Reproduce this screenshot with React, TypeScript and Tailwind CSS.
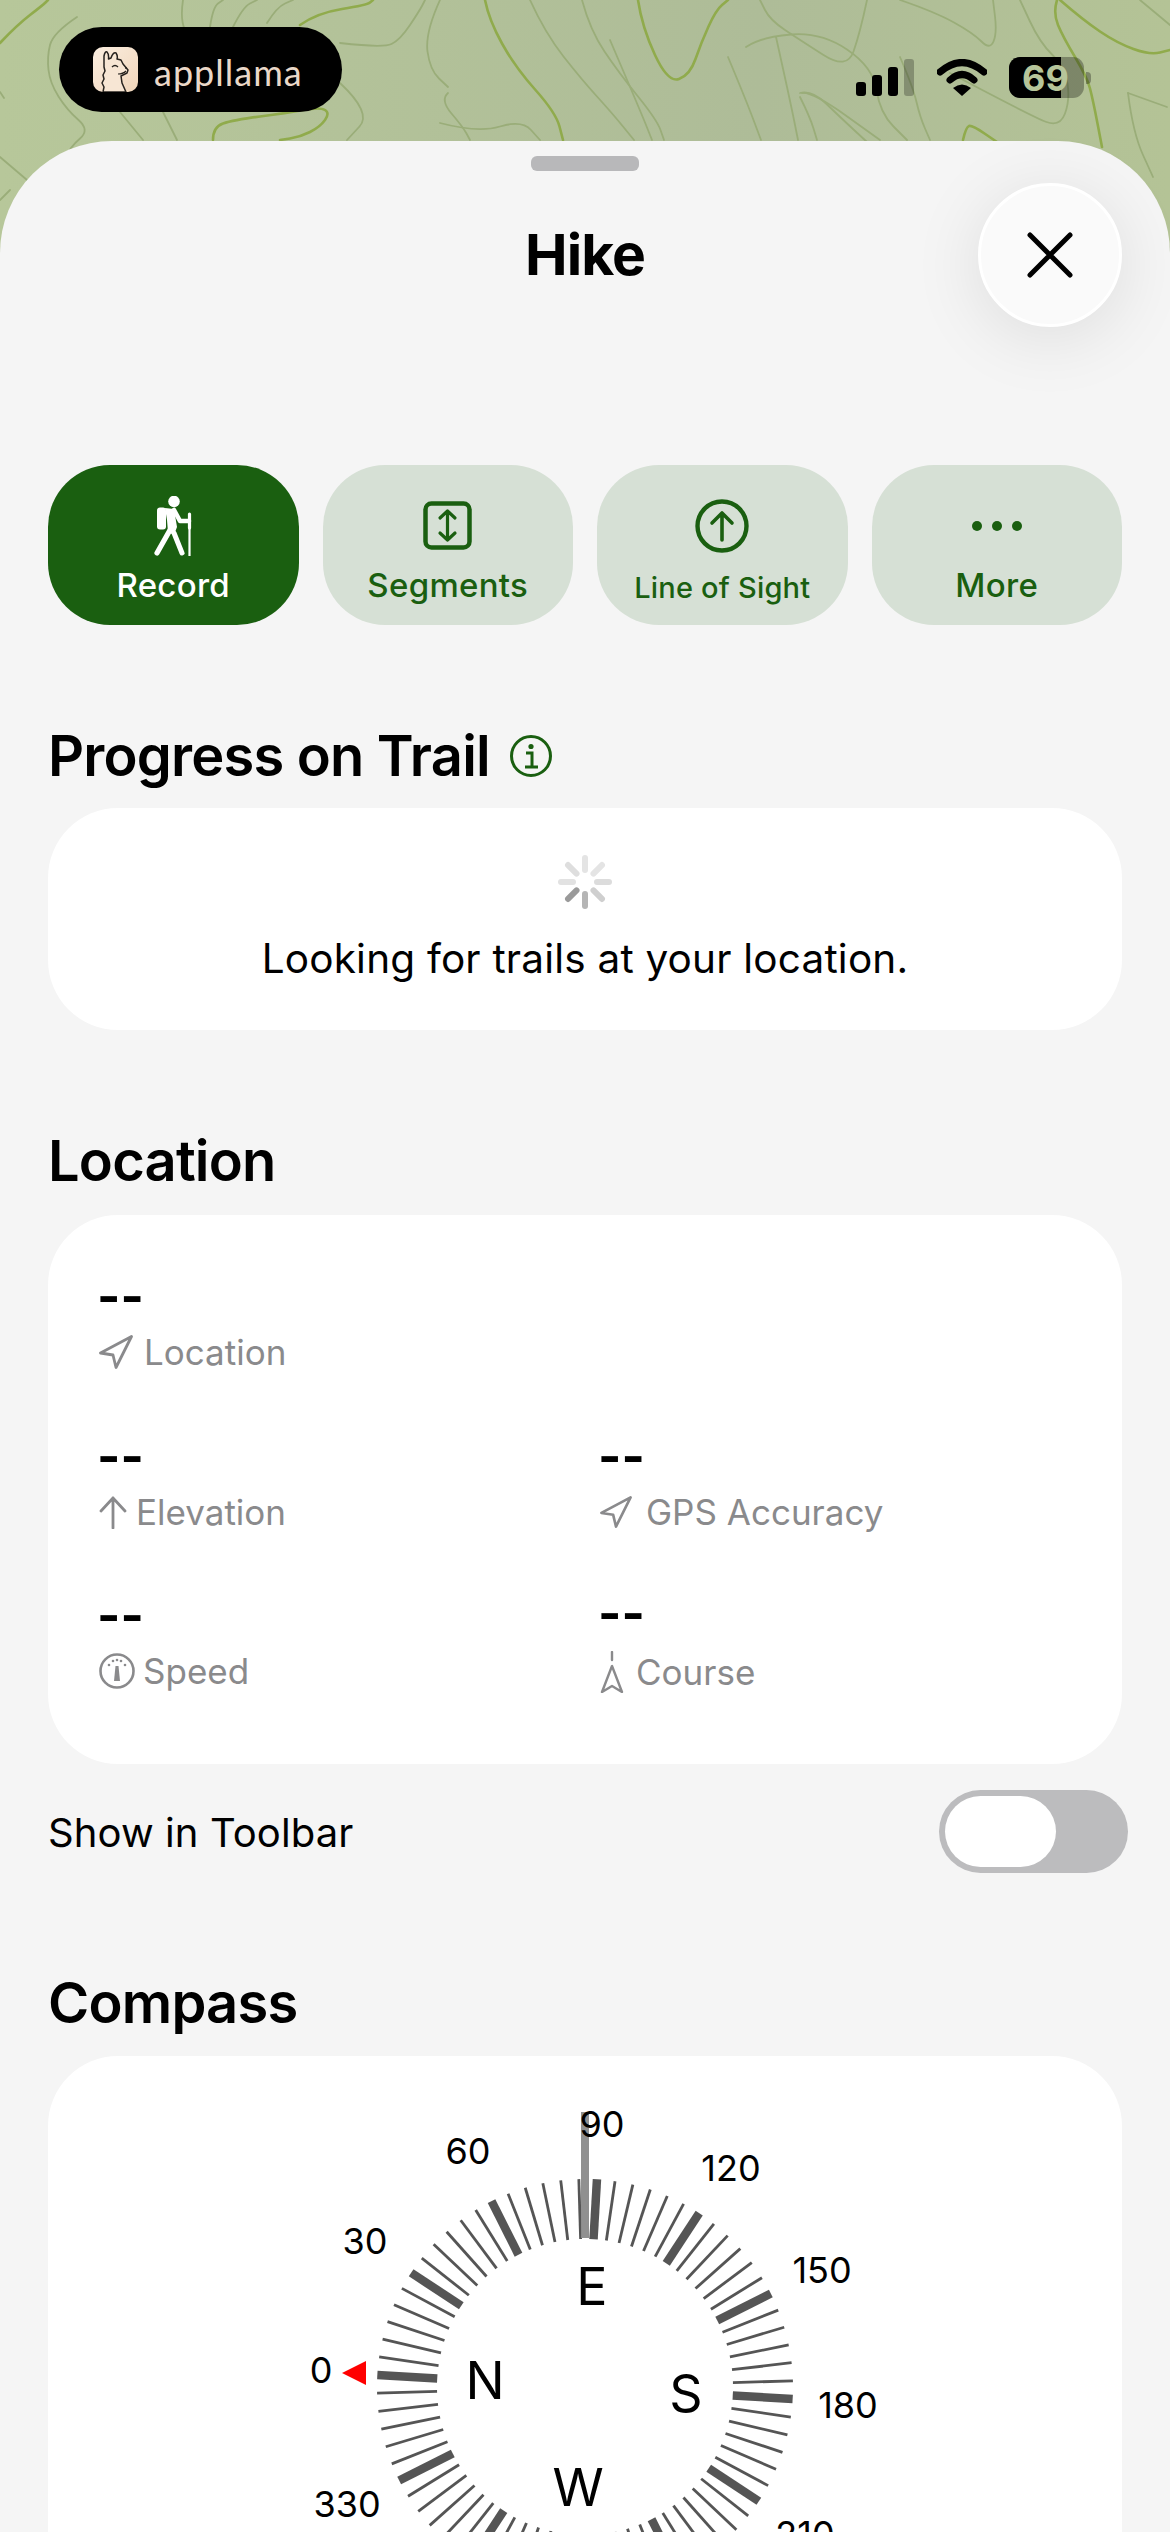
import React from "react";

const faint: string[] = [
  "M77 17L53 33L47 57L50 83L67 110L90 130L70 147L60 170",
  "M0 92L4 98",
  "M0 157L27 180",
  "M120 112L143 140",
  "M163 112L177 140",
  "M340 83L372 113L347 140",
  "M267 23L277 7L293 0",
  "M233 27L243 7L257 0",
  "M210 27L213 7L223 0",
  "M183 0L180 20L190 40",
  "M340 43L383 48L400 40L420 10L425 0",
  "M440 0L425 33L430 70L448 87",
  "M448 93L440 100L463 127L470 140",
  "M440 123L478 133L522 120L540 140",
  "M530 0L545 33L582 80L612 113L634 140",
  "M582 0L590 30L619 73L657 120L664 140",
  "M610 40L640 110L652 140",
  "M746 47L761 37L821 32L873 67L880 113L907 140",
  "M728 57L746 100L761 140",
  "M776 37L790 100L798 140",
  "M802 93L813 92L880 140",
  "M867 0L860 33L847 70L800 40L770 20L760 0",
  "M800 93L812 90L840 117L867 142",
  "M900 57L913 87L920 117L930 140",
  "M800 97L810 117L817 140",
  "M900 0L935 12L973 33L990 50L997 33L993 0",
  "M950 73L1033 117L1060 127L1070 100L1065 67L1040 43L1020 0",
  "M1128 93L1167 107",
  "M1128 93L1133 133L1153 177",
  "M1170 250L1150 200",
  "M1140 0L1170 25",
  "M0 200L10 190",
];

const strong: string[] = [
  "M0 43L17 25L43 5L48 0",
  "M300 25L317 13L367 5L373 0",
  "M213 140L213 127L233 120L287 113L320 107L330 113L320 127L300 137L280 140",
  "M485 0L489 20L515 67L556 113L563 140",
  "M638 0L642 27L668 83L690 75L701 43L716 10L728 0",
  "M1057 0L1053 13L1063 37L1087 77L1093 100L1102 147",
  "M1060 0L1083 20L1117 43L1150 55L1170 50",
  "M963 140L966 127L972 125L997 142",
];

function smooth(d: string): string {
  const pts = d
    .slice(1)
    .split("L")
    .map((p) => p.split(" ").map(Number));
  if (pts.length < 3) return d;
  let out = `M${pts[0][0]} ${pts[0][1]}`;
  for (let i = 1; i < pts.length - 1; i++) {
    const mx = (pts[i][0] + pts[i + 1][0]) / 2;
    const my = (pts[i][1] + pts[i + 1][1]) / 2;
    out += `Q${pts[i][0]} ${pts[i][1]} ${mx} ${my}`;
  }
  const last = pts[pts.length - 1];
  return `${out}L${last[0]} ${last[1]}`;
}

function MapBackground() {
  return (
    <svg className="absolute left-0 top-0 blur-[0.7px]" width="1170" height="340" viewBox="0 0 1170 340" fill="none">
      <defs>
        <linearGradient id="mapg" x1="0" y1="0" x2="1" y2="0">
          <stop offset="0" stopColor="#b7c79a" />
          <stop offset="0.65" stopColor="#aebc98" />
          <stop offset="1" stopColor="#b4c396" />
        </linearGradient>
      </defs>
      <rect width="1170" height="340" fill="url(#mapg)" />
      {faint.map((d) => (
        <path key={d} d={smooth(d)} stroke="#9aad79" strokeWidth="1.8" strokeLinejoin="round" strokeLinecap="round" />
      ))}
      {strong.map((d) => (
        <path key={d} d={smooth(d)} stroke="#90ab4c" strokeWidth="2.6" strokeLinejoin="round" strokeLinecap="round" />
      ))}
    </svg>
  );
}

function Llama() {
  return (
    <svg width="45" height="45" viewBox="0 0 45 45" fill="none" className="rounded-[10px]">
      <defs>
        <linearGradient id="llg" x1="0" y1="0" x2="1" y2="1">
          <stop offset="0" stopColor="#fbeee0" />
          <stop offset="1" stopColor="#f0d5ba" />
        </linearGradient>
      </defs>
      <rect width="45" height="45" fill="url(#llg)" />
      <path
        d="M10 45L11 40L9 36L11 32L10 28L12 24L11 20L11 9Q12 4 14 5Q16 7 15.5 12L18 11Q20 5 23 6Q25 9 24 12L28 13L30 17L35 23L34 26L28 29L29 36L33 45Z"
        fill="#f7e6d4"
        stroke="#26221e"
        strokeWidth="1.5"
        strokeLinejoin="round"
      />
      <path d="M19 20Q22 17 25 20" stroke="#26221e" strokeWidth="1.3" />
      <path d="M25 27Q30 27 33 24" stroke="#26221e" strokeWidth="1.2" />
      <circle cx="33" cy="21" r="0.9" fill="#26221e" />
    </svg>
  );
}

function Signal() {
  return (
    <div className="flex items-end gap-[6px] h-[37px]">
      <div className="w-[10px] h-[14px] rounded-[3px] bg-black" />
      <div className="w-[10px] h-[21px] rounded-[3px] bg-black" />
      <div className="w-[10px] h-[29px] rounded-[3px] bg-black" />
      <div className="w-[10px] h-[37px] rounded-[3px] bg-black/25" />
    </div>
  );
}

function Wifi() {
  return (
    <svg width="50" height="37" viewBox="0 0 50 37" fill="none">
      <path d="M3 13Q25 -6 47 13" stroke="#000" strokeWidth="7" strokeLinecap="round" />
      <path d="M13 21Q25 10 37 21" stroke="#000" strokeWidth="7" strokeLinecap="round" />
      <path d="M16 29Q25 22 34 29L25 37Z" fill="#000" />
    </svg>
  );
}

function Battery() {
  return (
    <div className="relative flex items-center">
      <div className="relative w-[75px] h-[41px] rounded-[11px] overflow-hidden bg-black/30">
        <div className="h-full w-[52px] bg-black" />
        <span className="absolute inset-0 flex items-center justify-center font-['Inter',sans-serif] font-bold text-[36px] leading-none text-[#b6c59a] pr-[2px]">69</span>
      </div>
      <div className="ml-[2px] w-[5px] h-[12px] rounded-r-[4px] bg-black/30" />
    </div>
  );
}

function Hiker({ color }: { color: string }) {
  return (
    <svg width="39" height="60" viewBox="0 0 39 60" fill="none">
      <circle cx="20" cy="5.5" r="5.8" fill={color} />
      <rect x="3" y="11.5" width="9" height="22" rx="3" fill={color} />
      <path d="M11 12L20 13L23 31L20 39L14 36L13 24Z" fill={color} />
      <path d="M20 14L26 25L35 25" stroke={color} strokeWidth="4.6" strokeLinejoin="round" strokeLinecap="round" />
      <path d="M16 34L3 57" stroke={color} strokeWidth="5.2" strokeLinecap="round" />
      <path d="M20 37L28 57" stroke={color} strokeWidth="5" strokeLinecap="round" />
      <path d="M35.5 18V32" stroke={color} strokeWidth="3.2" strokeLinecap="round" />
      <path d="M35.5 30V60" stroke={color} strokeWidth="2.2" />
    </svg>
  );
}

function SegmentsIcon() {
  return (
    <svg width="49" height="49" viewBox="0 0 49 49" fill="none" stroke="#1a5f10">
      <rect x="2.5" y="2.5" width="44" height="44" rx="6" strokeWidth="4.5" />
      <path d="M24.5 10V39M17 17L24.5 10L32 17M17 32L24.5 39L32 32" strokeWidth="3.2" strokeLinecap="round" strokeLinejoin="round" />
    </svg>
  );
}

function SightIcon() {
  return (
    <svg width="54" height="54" viewBox="0 0 54 54" fill="none" stroke="#1a5f10">
      <circle cx="27" cy="27" r="24.5" strokeWidth="4.4" />
      <path d="M27 41V14M17 24L27 14L37 24" strokeWidth="3.6" strokeLinecap="round" strokeLinejoin="round" />
    </svg>
  );
}

function MoreIcon() {
  return (
    <div className="flex gap-[10px]">
      <div className="w-[10px] h-[10px] rounded-full bg-[#1a5f10]" />
      <div className="w-[10px] h-[10px] rounded-full bg-[#1a5f10]" />
      <div className="w-[10px] h-[10px] rounded-full bg-[#1a5f10]" />
    </div>
  );
}

function ActionButton({
  active,
  label,
  icon,
  small,
}: {
  active?: boolean;
  label: string;
  icon: React.ReactNode;
  small?: boolean;
}) {
  return (
    <div
      className={`flex-1 h-[160px] rounded-[62px] flex flex-col items-center ${active ? "bg-[#1a5f10] text-white" : "bg-[#d6e0d5] text-[#1a5f10]"}`}
    >
      <div className="h-[100px] w-full flex items-center justify-center pt-[21px]">{icon}</div>
      <div className={`font-medium leading-none ${small ? "text-[29px] mt-[8px] tracking-[0.2px]" : "text-[33px] mt-[4px] tracking-[0.3px]"}`}>{label}</div>
    </div>
  );
}

function Heading({ children, top }: { children: React.ReactNode; top: string }) {
  return (
    <div className={`${top} h-[70px] px-[48px] flex items-center gap-[20px] text-[56px] font-semibold tracking-[-0.8px] text-black`}>
      {children}
    </div>
  );
}

function Spinner() {
  const shades = ["#e4e4e4", "#e4e4e4", "#dcdcdc", "#cfcfcf", "#b5b5b5", "#9a9a9a", "#e2e2e2", "#dedede"];
  return (
    <svg width="56" height="56" viewBox="-28 -28 56 56">
      {shades.map((c, i) => (
        <line key={i} x1="0" y1="-12" x2="0" y2="-24" stroke={c} strokeWidth="6" strokeLinecap="round" transform={`rotate(${i * 45})`} />
      ))}
    </svg>
  );
}

function NavIcon({ size }: { size: number }) {
  return (
    <svg width={size} height={size} viewBox="0 0 34 34" fill="none" stroke="#8a8a8c" strokeWidth="2.8" strokeLinejoin="round">
      <path d="M32.5 1.5L1.5 18L14 20L17 32.5Z" />
    </svg>
  );
}

function ArrowIcon() {
  return (
    <svg width="28" height="33" viewBox="0 0 28 33" fill="none" stroke="#8a8a8c" strokeWidth="2.8" strokeLinecap="round" strokeLinejoin="round">
      <path d="M14 32V2M2 15L14 2L26 15" />
    </svg>
  );
}

function GaugeIcon() {
  return (
    <svg width="36" height="36" viewBox="0 0 36 36" fill="none">
      <circle cx="18" cy="18" r="16.5" stroke="#8a8a8c" strokeWidth="2.6" />
      <path d="M16.5 13H19.5L21 28H15Z" fill="#8a8a8c" />
      <circle cx="10" cy="12" r="1.3" fill="#8a8a8c" />
      <circle cx="14" cy="8" r="1.3" fill="#8a8a8c" />
      <circle cx="18" cy="7" r="1.3" fill="#8a8a8c" />
      <circle cx="22" cy="8" r="1.3" fill="#8a8a8c" />
      <circle cx="26" cy="12" r="1.3" fill="#8a8a8c" />
    </svg>
  );
}

function CourseIcon() {
  return (
    <svg width="24" height="42" viewBox="0 0 24 42" fill="none" stroke="#8a8a8c" strokeWidth="2.4" strokeLinejoin="round" strokeLinecap="round">
      <path d="M12 1V9" />
      <path d="M12 15L2 41L12 35L22 41Z" />
    </svg>
  );
}

function Stat({
  icon,
  label,
  gap,
  className,
  labelClass,
}: {
  icon: React.ReactNode;
  label: string;
  gap: string;
  className?: string;
  labelClass?: string;
}) {
  return (
    <div className={className}>
      <div className="h-[60px] -ml-[2px] -mt-[1px] flex items-center text-[50px] font-bold leading-none text-black">--</div>
      <div className={`h-[40px] mt-[6px] flex items-center ${gap} text-[35px] text-[#8a8a8c] leading-none ${labelClass ?? ""}`}>
        {icon}
        <span>{label}</span>
      </div>
    </div>
  );
}

function CompassDial() {
  const cx = 585 - 48;
  const cy = 2387 - 2056;
  const ticks: number[] = [];
  for (let i = 0; i < 72; i++) ticks.push(i * 5);
  return (
    <svg className="absolute left-0 top-0" width="1074" height="476" viewBox="0 0 1074 476" fill="none">
      {ticks.map((deg) => {
        const major = deg % 30 === 0;
        const ang = ((deg + 3.3 - 180) * Math.PI) / 180;
        const c = Math.cos(ang);
        const s = Math.sin(ang);
        return (
          <line
            key={deg}
            x1={cx + 148 * c}
            y1={cy + 148 * s}
            x2={cx + 208 * c}
            y2={cy + 208 * s}
            stroke="#555555"
            strokeWidth={major ? 8.5 : 2.8}
          />
        );
      })}
      <rect x="533" y="56" width="8" height="126" fill="#8a8a8a" fillOpacity="0.95" />
      <path d="M294 317L318 305V329Z" fill="#ff0000" />
    </svg>
  );
}

function DialLabel({ text, className }: { text: string; className: string }) {
  return (
    <span className={`absolute -translate-x-1/2 -translate-y-1/2 leading-none text-black ${className}`}>{text}</span>
  );
}

export default function App() {
  return (
    <div className="relative w-[1170px] h-[2532px] overflow-hidden font-['Inter',sans-serif]">
      <MapBackground />
      <div className="relative h-[141px] flex items-start justify-between">
        <div className="ml-[59px] mt-[27px] w-[283px] h-[85px] rounded-full bg-black flex items-center pl-[34px] gap-[16px]">
          <Llama />
          <span className="font-['Lato',sans-serif] font-normal text-[36px] leading-none text-[#ead8c8] tracking-[1px] mt-[4px]">appllama</span>
        </div>
        <div className="mt-[57px] mr-[79px] flex items-center">
          <Signal />
          <div className="ml-[23px]"><Wifi /></div>
          <div className="ml-[22px]"><Battery /></div>
        </div>
      </div>

      <div className="relative flex flex-col h-[2391px] bg-[#f5f5f5] rounded-t-[112px]">
        <div className="mt-[15px] mx-auto w-[108px] h-[15px] rounded-[6px] bg-[#b8b8ba]" />
        <div className="mt-[44px] h-[80px] flex items-center justify-center text-[57px] font-bold text-black tracking-[-1px]">Hike</div>
        <div className="absolute left-[978px] top-[42px] w-[144px] h-[144px] rounded-full bg-[#fafafa] border-[3px] border-white shadow-[0_10px_70px_rgba(0,0,0,0.10)] flex items-center justify-center">
          <svg width="46" height="46" viewBox="0 0 46 46" fill="none" stroke="#000" strokeWidth="5" strokeLinecap="round">
            <path d="M3 3L43 43M43 3L3 43" />
          </svg>
        </div>

        <div className="mt-[170px] px-[48px] flex gap-[24px]">
          <ActionButton active label="Record" icon={<Hiker color="#ffffff" />} />
          <ActionButton label="Segments" icon={<SegmentsIcon />} />
          <ActionButton small label="Line of Sight" icon={<SightIcon />} />
          <ActionButton label="More" icon={<MoreIcon />} />
        </div>

        <Heading top="mt-[96px]">
          <span>Progress on Trail</span>
          <svg width="42" height="42" viewBox="0 0 42 42" fill="none" stroke="#1a5f10">
            <circle cx="21" cy="21" r="19.5" strokeWidth="3" />
            <path d="M16 18H22V32M15 32H28" strokeWidth="3" />
            <circle cx="21" cy="11.5" r="2.6" fill="#1a5f10" stroke="none" />
          </svg>
        </Heading>

        <div className="mt-[17px] mx-[48px] h-[222px] rounded-[70px] bg-white flex flex-col items-center pt-[46px]">
          <Spinner />
          <div className="mt-[24px] text-[40.5px] leading-[50px] text-black tracking-[0.2px]">Looking for trails at your location.</div>
        </div>

        <Heading top="mt-[96px]">Location</Heading>

        <div className="mt-[19px] mx-[48px] h-[549px] rounded-[70px] bg-white pt-[52px] pl-[51px]">
          <Stat icon={<NavIcon size={34} />} gap="gap-[11px]" label="Location" />
          <div className="mt-[55px] grid grid-cols-[501px_1fr]">
            <Stat icon={<ArrowIcon />} gap="gap-[9px]" label="Elevation" />
            <Stat icon={<NavIcon size={32} />} gap="gap-[14px]" label="GPS Accuracy" />
          </div>
          <div className="mt-[54px] grid grid-cols-[501px_1fr]">
            <Stat icon={<GaugeIcon />} gap="gap-[8px]" label="Speed" />
            <Stat icon={<CourseIcon />} gap="gap-[12px]" label="Course" className="-mt-[2px]" labelClass="translate-y-[3px]" />
          </div>
        </div>

        <div className="mt-[26px] pl-[48px] pr-[42px] h-[83px] flex items-center justify-between">
          <span className="text-[40px] text-black tracking-[0.1px] translate-y-[1px]">Show in Toolbar</span>
          <div className="w-[189px] h-[83px] rounded-full bg-[#bcbcbe] p-[6px]">
            <div className="w-[111px] h-[71px] rounded-full bg-white" />
          </div>
        </div>

        <Heading top="mt-[95px]">Compass</Heading>

        <div className="relative mt-[18px] mx-[48px] flex-1 rounded-t-[70px] bg-white">
          <CompassDial />
          <DialLabel text="0" className="left-[273px] top-[314px] text-[36px]" />
          <DialLabel text="30" className="left-[317px] top-[185px] text-[36px]" />
          <DialLabel text="60" className="left-[420px] top-[95px] text-[36px]" />
          <DialLabel text="90" className="left-[554px] top-[68px] text-[36px]" />
          <DialLabel text="120" className="left-[683px] top-[112px] text-[36px]" />
          <DialLabel text="150" className="left-[774px] top-[214px] text-[36px]" />
          <DialLabel text="180" className="left-[800px] top-[349px] text-[36px]" />
          <DialLabel text="210" className="left-[757px] top-[478px] text-[36px]" />
          <DialLabel text="330" className="left-[299px] top-[448px] text-[36px]" />
          <DialLabel text="E" className="left-[544px] top-[231px] text-[52px]" />
          <DialLabel text="N" className="left-[437px] top-[325px] text-[52px]" />
          <DialLabel text="S" className="left-[638px] top-[338px] text-[52px]" />
          <DialLabel text="W" className="left-[530px] top-[432px] text-[52px]" />
        </div>
      </div>
    </div>
  );
}
